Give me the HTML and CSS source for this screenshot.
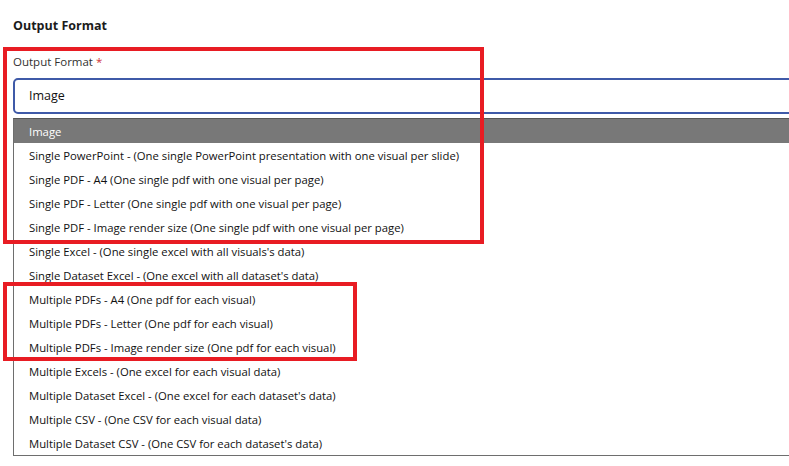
FILE: index.html
```html
<!DOCTYPE html>
<html>
<head>
<meta charset="utf-8">
<link rel="stylesheet" href="styles.css">
</head>
<body>
<div class="page">
  <h2 class="section-title">Output Format</h2>
  <div class="field">
    <div class="field-label">Output Format <span class="req">*</span></div>
    <div class="select-input">Image</div>
    <ul class="listbox">
      <li class="option selected">Image</li>
      <li class="option">Single PowerPoint - (One single PowerPoint presentation with one visual per slide)</li>
      <li class="option">Single PDF - A4 (One single pdf with one visual per page)</li>
      <li class="option">Single PDF - Letter (One single pdf with one visual per page)</li>
      <li class="option">Single PDF - Image render size (One single pdf with one visual per page)</li>
      <li class="option">Single Excel - (One single excel with all visuals's data)</li>
      <li class="option">Single Dataset Excel - (One excel with all dataset's data)</li>
      <li class="option">Multiple PDFs - A4 (One pdf for each visual)</li>
      <li class="option">Multiple PDFs - Letter (One pdf for each visual)</li>
      <li class="option">Multiple PDFs - Image render size (One pdf for each visual)</li>
      <li class="option">Multiple Excels - (One excel for each visual data)</li>
      <li class="option">Multiple Dataset Excel - (One excel for each dataset's data)</li>
      <li class="option">Multiple CSV - (One CSV for each visual data)</li>
      <li class="option">Multiple Dataset CSV - (One CSV for each dataset's data)</li>
    </ul>
  </div>
  <div class="highlight highlight-top"></div>
  <div class="highlight highlight-mid"></div>
</div>
</body>
</html>
```
FILE: styles.css
```css
html, body {
  margin: 0;
  padding: 0;
  background: #ffffff;
  overflow: hidden;
}
body {
  width: 789px;
  height: 466px;
  font-family: "Open Sans", "Noto Sans", sans-serif;
  color: #000;
}
.page {
  position: relative;
  padding: 17px 0 0 13px;
  width: 789px;
  height: 466px;
  box-sizing: border-box;
  overflow: hidden;
}
.section-title {
  margin: 0;
  font-size: 12.5px;
  font-weight: 700;
  line-height: 18px;
  color: #1b1b1b;
}
.field {
  margin-top: 19px;
}
.field-label {
  font-size: 11.5px;
  line-height: 16px;
  font-weight: 500;
  color: #323130;
}
.req {
  color: #d13438;
}
.select-input {
  margin-top: 8px;
  height: 36px;
  width: 790px;
  box-sizing: border-box;
  border: 2px solid #3f5aa8;
  border-radius: 5px;
  padding-left: 14px;
  font-size: 12.5px;
  line-height: 32px;
  color: #111;
}
.listbox {
  list-style: none;
  margin: 4px 0 0 0;
  padding: 0;
  width: 790px;
  border-left: 1px solid #6e6e6e;
  border-bottom: 1px solid #6e6e6e;
  border-top: 1px solid #555;
}
.option {
  height: 24px;
  box-sizing: border-box;
  padding-top: 1px;
  line-height: 23px;
  padding-left: 15px;
  font-size: 11.3px;
  color: #111;
  white-space: nowrap;
}
.option.selected {
  background: #787878;
  color: #fff;
}
.highlight {
  position: absolute;
  border: 4px solid #e81c23;
  box-sizing: border-box;
}
.highlight-top {
  left: 3px;
  top: 47px;
  width: 481px;
  height: 197px;
}
.highlight-mid {
  left: 3px;
  top: 282px;
  width: 354px;
  height: 79px;
}
```
